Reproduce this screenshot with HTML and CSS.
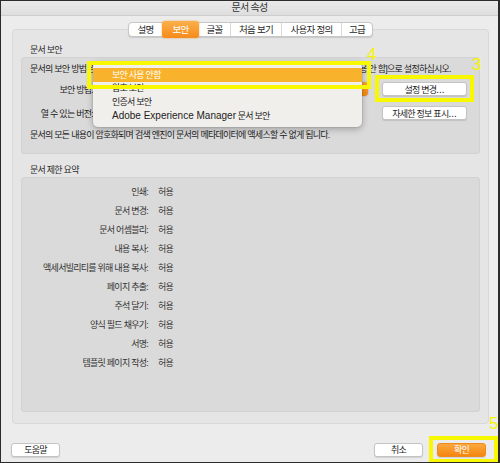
FILE: index.html
```html
<!DOCTYPE html>
<html lang="ko">
<head>
<meta charset="utf-8">
<title>문서 속성</title>
<link rel="stylesheet" href="styles.css">
</head>
<body>
<div class="window">
  <div class="titlebar">문서 속성</div>
  <div class="tabs">
    <div class="tab t1">설명</div>
    <div class="tab t2 active">보안</div>
    <div class="tab t3">글꼴</div>
    <div class="tab t4">처음 보기</div>
    <div class="tab t5">사용자 정의</div>
    <div class="tab t6">고급</div>
  </div>
  <div class="panel">
    <div class="sec-label">문서 보안</div>
    <div class="box box-sec">
      <div class="row-full">문서의 보안 방법은 문서에 대해 설정할 수 있는 제한을 지정합니다. 보안 제한을 제거하려면 [보안 사용 안 함]으로 설정하십시오.</div>
      <div class="lbl">보안 방법:</div>
      <div class="popup"><span class="popup-arrow"></span></div>
      <div class="btn">설정 변경<span class="lat">...</span></div>
      <div class="lbl">열 수 있는 버전:</div>
      <div class="val"></div>
      <div class="btn">자세한 정보 표시<span class="lat">...</span></div>
      <div class="row-full">문서의 모든 내용이 암호화되며 검색 엔진이 문서의 메타데이터에 액세스할 수 없게 됩니다.</div>
    </div>
    <div class="sec-label sec-label2">문서 제한 요약</div>
    <div class="box box-sum">
      <div class="k">인쇄:</div><div class="v">허용</div>
      <div class="k">문서 변경:</div><div class="v">허용</div>
      <div class="k">문서 어셈블리:</div><div class="v">허용</div>
      <div class="k">내용 복사:</div><div class="v">허용</div>
      <div class="k">액세서빌리티를 위해 내용 복사:</div><div class="v">허용</div>
      <div class="k">페이지 추출:</div><div class="v">허용</div>
      <div class="k">주석 달기:</div><div class="v">허용</div>
      <div class="k">양식 필드 채우기:</div><div class="v">허용</div>
      <div class="k">서명:</div><div class="v">허용</div>
      <div class="k">템플릿 페이지 작성:</div><div class="v">허용</div>
    </div>
  </div>
  <div class="footer">
    <div class="btn fbtn">도움말</div>
    <div class="spacer"></div>
    <div class="btn fbtn">취소</div>
    <div class="btn fbtn primary">확인</div>
  </div>

  <div class="menu">
    <div class="mi sel">보안 사용 안함</div>
    <div class="mi mi2">암호 보안</div>
    <div class="mi">인증서 보안</div>
    <div class="mi"><span class="lat">Adobe Experience Manager</span> 문서 보안</div>
  </div>

  <div class="mark mark4"></div>
  <div class="mark mark3"></div>
  <div class="mark mark5"></div>
  <div class="num num4">4</div>
  <div class="num num3">3</div>
  <div class="num num5">5</div>
</div>
</body>
</html>
```

FILE: styles.css
```css
* { box-sizing: border-box; }
html, body { margin: 0; padding: 0; background: #ececec; }
body {
  font-family: "Liberation Sans", "Noto Sans CJK KR", sans-serif;
  font-size: 9px;
  letter-spacing: -0.75px;
  color: #222;
}
.lat { font-size: 10px; letter-spacing: 0; }

.window {
  position: relative;
  width: 500px;
  height: 463px;
  border: 1px solid #2b2b2b;
  border-right-width: 2px;
  background: #ececec;
  overflow: hidden;
}

.titlebar {
  height: 15px;
  line-height: 14px;
  text-align: center;
  font-size: 10px;
  color: #333;
  background: linear-gradient(#e9e9e9, #dedede);
  border-bottom: 1px solid #cdcdcd;
}

.tabs {
  position: relative;
  z-index: 2;
  display: flex;
  width: 245px;
  height: 15px;
  margin: 6px 0 -8px 127px;
  background: #fff;
  border: 1px solid #c6c6c6;
  border-radius: 4px;
  box-shadow: 0 1px 1px rgba(0,0,0,0.12);
}
.tab {
  height: 13px;
  line-height: 13px;
  text-align: center;
  color: #2a2a2a;
  border-left: 1px solid #d9d9d9;
  font-size: 9.5px;
}
.tab:first-child { border-left: none; }
.t1 { width: 33px; }
.t2 { width: 37px; }
.t3 { width: 31px; }
.t4 { width: 51px; }
.t5 { width: 60px; }
.t6 { width: 31px; }
.tab.active {
  margin: -2px 0;
  height: 17px;
  line-height: 17px;
  color: #fff;
  border-left: none;
  border-radius: 3px;
  background: linear-gradient(#fbb04a, #f58b1c);
  box-shadow: 0 0 2px rgba(245, 140, 30, 0.7);
}
.tab.active + .tab { border-left: none; }

.panel {
  height: 395px;
  margin: 0 9px 0 11px;
  padding: 13px 8px 0 8px;
  background: #e5e5e5;
  border: 1px solid #d8d8d8;
  border-radius: 4px;
}

.sec-label {
  height: 14px;
  line-height: 14px;
  padding-left: 9px;
  color: #2a2a2a;
}
.sec-label2 {
  margin-top: 10px;
  height: 13px;
  line-height: 13px;
}

.box {
  background: #dadada;
  border: 1px solid #d2d2d2;
  border-radius: 3px;
}

.box-sec {
  height: 97px;
  padding: 4px 13px 0 8px;
  display: grid;
  grid-template-columns: 63px 272px 85px;
  grid-template-rows: 14px 26px 22px 22px;
  column-gap: 3px;
  align-items: center;
}
.row-full {
  grid-column: 1 / 4;
  white-space: nowrap;
  line-height: 14px;
}
.lbl { text-align: right; white-space: nowrap; }
.popup {
  position: relative;
  height: 14px;
  background: #fff;
  border-radius: 3px;
  box-shadow: 0 0 0 1px #cbcbcb;
}
.popup-arrow {
  position: absolute;
  right: 0;
  top: 0;
  width: 16px;
  height: 14px;
  border-radius: 0 3px 3px 0;
  background: linear-gradient(#f9a23a, #f28712);
}

.btn {
  height: 14px;
  line-height: 13px;
  text-align: center;
  background: #fff;
  border: 1px solid #c4c4c4;
  border-radius: 3px;
  box-shadow: 0 1px 1px rgba(0,0,0,0.12);
  color: #222;
  white-space: nowrap;
}
.box-sec .btn { width: 85px; margin-left: 11px; }

.box-sum {
  height: 235px;
  padding-top: 4px;
  display: grid;
  grid-template-columns: 126px 1fr;
  grid-auto-rows: 19px;
  column-gap: 10px;
  align-items: center;
  align-content: start;
}
.k { text-align: right; white-space: nowrap; color: #333; }
.v { color: #333; }

.footer {
  display: flex;
  gap: 14px;
  padding: 19px 12px 0 10px;
}
.spacer { flex: 1; }
.fbtn { width: 49px; }
.fbtn.primary {
  color: #fff;
  border-color: #ef8a1c;
  background: linear-gradient(#fba840, #f5860e);
}

.menu {
  position: absolute;
  left: 92px;
  top: 61px;
  width: 269px;
  height: 65px;
  padding-top: 6px;
  background: #f1efec;
  border-radius: 5px;
  box-shadow: 0 2px 7px rgba(0,0,0,0.28), 0 0 0 1px rgba(0,0,0,0.06);
  z-index: 5;
}
.mi {
  height: 14px;
  line-height: 14px;
  padding-left: 19px;
  color: #222;
  white-space: nowrap;
}
.mi2 { height: 13px; line-height: 13px; }
.mi.sel {
  color: #fff;
  background: #f8b22c;
}

.mark {
  position: absolute;
  border: 4px solid #f8f800;
  z-index: 10;
}
.mark4 { left: 86px; top: 60px; width: 284px; height: 28px; }
.mark3 { left: 374px; top: 74px; width: 99px; height: 27px; }
.mark5 { left: 428px; top: 435px; width: 69px; height: 27px; }

.num {
  position: absolute;
  z-index: 10;
  font-family: "Liberation Sans", sans-serif;
  font-size: 17px;
  line-height: 17px;
  letter-spacing: 0;
  color: #f5f500;
}
.num4 { left: 366px; top: 45px; }
.num3 { left: 471px; top: 55px; }
.num5 { left: 488px; top: 414px; }
```
